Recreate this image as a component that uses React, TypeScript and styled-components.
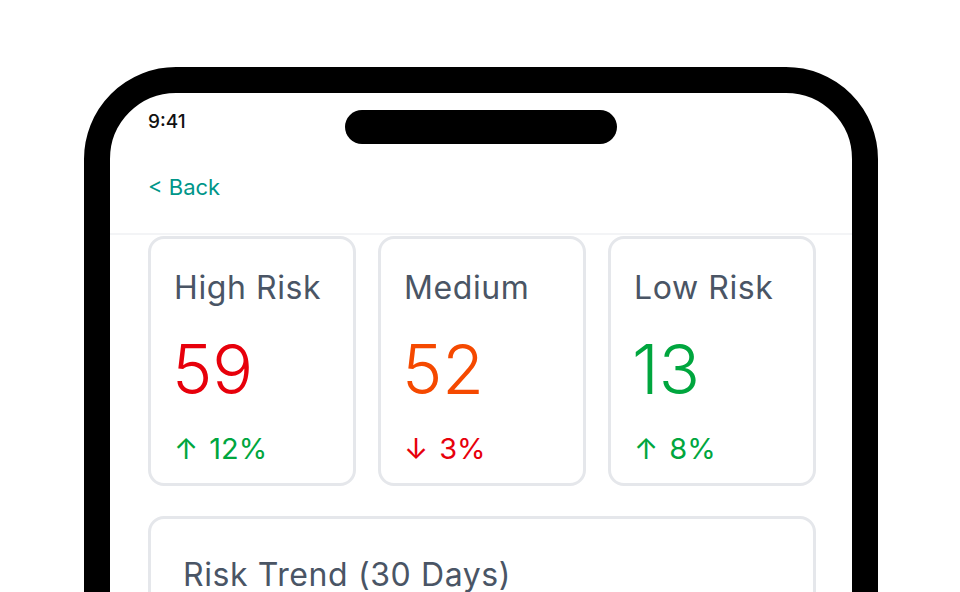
import React from "react";
import styled, { createGlobalStyle } from "styled-components";

const Global = createGlobalStyle`
  html, body { margin: 0; padding: 0; background: #fff; }
  body { font-family: Inter, "Noto Sans", sans-serif; overflow: hidden; }
  #root { width: 960px; height: 592px; overflow: hidden; }
`;

const Stage = styled.div`
  width: 960px;
  height: 592px;
  overflow: hidden;
  box-sizing: border-box;
  padding: 67px 0 0 84px;
`;

const Phone = styled.div`
  width: 794px;
  height: 900px;
  box-sizing: border-box;
  border: 26px solid #000;
  border-radius: 92px;
  background: #fff;
  overflow: hidden;
  display: flex;
  flex-direction: column;
`;

const StatusBar = styled.div`
  position: relative;
  height: 56px;
  box-sizing: border-box;
  padding: 17px 38px 0;
`;

const Time = styled.span`
  font-size: 19px;
  line-height: 24px;
  font-weight: 500;
  color: #111;
`;

const Island = styled.div`
  position: absolute;
  top: 17px;
  left: 50%;
  transform: translateX(-50%);
  width: 272px;
  height: 34px;
  border-radius: 17px;
  background: #000;
`;

const Header = styled.div`
  padding: 22px 38px 30px;
  border-bottom: 2px solid #f3f4f6;
`;

const BackLink = styled.a`
  font-size: 22px;
  line-height: 32px;
  color: #009689;
  text-decoration: none;
`;

const Content = styled.div`
  padding: 1px 36px 0 38px;
  display: flex;
  flex-direction: column;
  gap: 30px;
`;

const StatsGrid = styled.div`
  display: grid;
  grid-template-columns: repeat(3, 1fr);
  gap: 22px;
`;

const StatCard = styled.div`
  border: 3px solid #e5e7eb;
  border-radius: 16px;
  padding: 25px 24px 12px 23px;
  display: flex;
  flex-direction: column;
`;

const StatLabel = styled.div`
  font-size: 32px;
  line-height: 48px;
  letter-spacing: 0.6px;
  color: #4a5565;
`;

const StatValue = styled.div<{ $color: string }>`
  margin: 23px 0 0 -2px;
  font-size: 68px;
  line-height: 68px;
  font-weight: 300;
  color: ${(p) => p.$color};
`;

const StatChange = styled.div<{ $up: boolean }>`
  margin-top: 24px;
  font-size: 29px;
  line-height: 44px;
  color: ${(p) => (p.$up ? "#00a63e" : "#e7000b")};
  display: flex;
  align-items: center;
  gap: 11px;
`;

const TrendCard = styled.div`
  border: 3px solid #e5e7eb;
  border-radius: 16px;
  padding: 32px;
  height: 300px;
`;

const TrendTitle = styled.div`
  font-size: 32px;
  line-height: 48px;
  letter-spacing: 0.6px;
  color: #4a5565;
`;

const stats = [
  { label: "High Risk", value: "59", color: "#e7000b", up: true, change: "12%" },
  { label: "Medium", value: "52", color: "#f54900", up: false, change: "3%" },
  { label: "Low Risk", value: "13", color: "#00a63e", up: true, change: "8%" },
];

export default function App() {
  return (
    <Stage>
      <Global />
      <Phone>
        <StatusBar>
          <Time>9:41</Time>
          <Island />
        </StatusBar>
        <Header>
          <BackLink href="#">&lt; Back</BackLink>
        </Header>
        <Content>
          <StatsGrid>
            {stats.map((s) => (
              <StatCard key={s.label}>
                <StatLabel>{s.label}</StatLabel>
                <StatValue $color={s.color}>{s.value}</StatValue>
                <StatChange $up={s.up}>
                  <span>{s.up ? "↑" : "↓"}</span>
                  <span>{s.change}</span>
                </StatChange>
              </StatCard>
            ))}
          </StatsGrid>
          <TrendCard>
            <TrendTitle>Risk Trend (30 Days)</TrendTitle>
          </TrendCard>
        </Content>
      </Phone>
    </Stage>
  );
}
